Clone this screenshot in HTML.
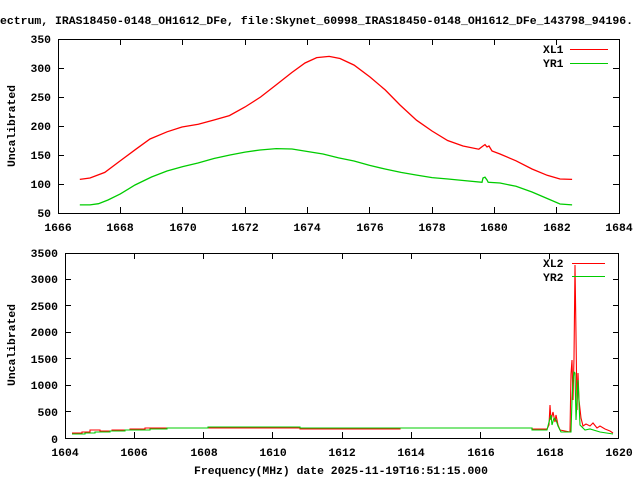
<!DOCTYPE html>
<html><head><meta charset="utf-8"><style>
html,body{margin:0;padding:0;background:#fff;width:640px;height:480px;overflow:hidden}
svg{display:block}
text{font-family:"Liberation Mono",monospace;font-weight:bold;font-size:11.4px;fill:#000}
</style></head><body>
<svg width="640" height="480" viewBox="0 0 640 480" xmlns="http://www.w3.org/2000/svg">
<text x="0" y="24" textLength="633" lengthAdjust="spacingAndGlyphs">ectrum, IRAS18450-0148_OH1612_DFe, file:Skynet_60998_IRAS18450-0148_OH1612_DFe_143798_94196.</text>
<!-- top plot -->
<g fill="none" stroke="#000" stroke-width="1">
<rect x="58.5" y="39.5" width="561" height="174"/>
<path d="M58 68.5h6M58 97.5h6M58 126.5h6M58 155.5h6M58 184.5h6M619 68.5h-6M619 97.5h-6M619 126.5h-6M619 155.5h-6M619 184.5h-6
M120.5 213v-6M182.5 213v-6M245.5 213v-6M307.5 213v-6M369.5 213v-6M432.5 213v-6M494.5 213v-6M556.5 213v-6
M120.5 39v6M182.5 39v6M245.5 39v6M307.5 39v6M369.5 39v6M432.5 39v6M494.5 39v6M556.5 39v6"/>
</g>
<g text-anchor="end">
<text x="51" y="217">50</text><text x="51" y="188">100</text><text x="51" y="159">150</text><text x="51" y="130">200</text><text x="51" y="101">250</text><text x="51" y="72">300</text><text x="51" y="43">350</text>
</g>
<g text-anchor="middle">
<text x="58" y="231">1666</text><text x="120" y="231">1668</text><text x="183" y="231">1670</text><text x="245" y="231">1672</text><text x="307" y="231">1674</text><text x="370" y="231">1676</text><text x="432" y="231">1678</text><text x="494" y="231">1680</text><text x="557" y="231">1682</text><text x="619" y="231">1684</text>
</g>
<text transform="translate(15,126) rotate(-90)" text-anchor="middle">Uncalibrated</text>
<polyline fill="none" stroke="#f00" stroke-width="1.3" points="79.8,179.4 90,178 104.8,172.4 120,161 135.9,149.2 150,139 167.1,131.8 182,127 198.3,124.3 214,120 229.4,115.6 245,107 260.6,97 276,85 291.7,72.6 305,63 316.7,57.6 329.2,56.4 340,58.5 354.1,65.1 370,77 385.3,90 400,105 416.5,120.2 432,131 447.6,140.5 463,146 478.8,149.2 483,146 485,144.6 487,147 489,146 492,151 500,154 516,160.8 532,169 547.2,175.3 560,179 572.1,179.4"/>
<polyline fill="none" stroke="#0c0" stroke-width="1.3" points="79.8,204.9 90,204.9 98.5,203.7 108,200 120.3,193.9 135,185 151.5,177 167,171 182.7,166.6 198,163 213.9,158.5 230,155 245,152.1 260,150 276.2,148.6 292,149 307.4,151.5 323,154 338.6,157.9 354,161 369.7,165.4 385,169 400.9,172.4 416,175 432.1,177.6 448,179 463.3,180.5 482,182.3 483,178 485,177.2 487,180 488.2,182.3 500,183 516,186.3 532,192 547.2,198.5 560,204 572.1,204.9"/>
<text x="543" y="53">XL1</text><path d="M570 49.5h38" stroke="#f00" stroke-width="1"/>
<text x="543" y="67">YR1</text><path d="M570 63.5h38" stroke="#0c0" stroke-width="1"/>
<!-- bottom plot -->
<g fill="none" stroke="#000" stroke-width="1">
<rect x="65.5" y="253.5" width="553" height="185"/>
<path d="M65 279.5h6M65 305.5h6M65 332.5h6M65 358.5h6M65 385.5h6M65 411.5h6M619 279.5h-6M619 305.5h-6M619 332.5h-6M619 358.5h-6M619 385.5h-6M619 411.5h-6
M134.5 438v-6M203.5 438v-6M272.5 438v-6M342.5 438v-6M411.5 438v-6M480.5 438v-6M549.5 438v-6
M134.5 253v6M203.5 253v6M272.5 253v6M342.5 253v6M411.5 253v6M480.5 253v6M549.5 253v6"/>
</g>
<g text-anchor="end">
<text x="58" y="443">0</text><text x="58" y="416">500</text><text x="58" y="389">1000</text><text x="58" y="363">1500</text><text x="58" y="336">2000</text><text x="58" y="310">2500</text><text x="58" y="283">3000</text><text x="58" y="257">3500</text>
</g>
<g text-anchor="middle">
<text x="65" y="456">1604</text><text x="134" y="456">1606</text><text x="204" y="456">1608</text><text x="273" y="456">1610</text><text x="342" y="456">1612</text><text x="411" y="456">1614</text><text x="481" y="456">1616</text><text x="550" y="456">1618</text><text x="619" y="456">1620</text>
</g>
<text transform="translate(15,345) rotate(-90)" text-anchor="middle">Uncalibrated</text>
<text x="341" y="474" text-anchor="middle">Frequency(MHz) date 2025-11-19T16:51:15.000</text>
<polyline fill="none" stroke="#f00" stroke-width="1.1" points="72,433 82,433 82,432 90,432 90,430 100,430 100,431 112,431 112,430 130,430 130,429 145,429 145,428 300,428 300,429 400,429 400,428 532,428 532,429 547,429 549,425 550,405 551,420 553,412 555,422 556,415 558,425 560,430 565,431 570,432 571,374 572,360 573,400 574,358 575,265 576,335 577,410 578,373 579,400 581,418 583,426 586,424 590,426 593,423 597,428 600,426 605,429 610,431 613,433"/>
<polyline fill="none" stroke="#0c0" stroke-width="1.1" points="72,434 85,434 85,433 95,433 95,432 110,432 110,431 125,431 125,430 150,430 150,429 167,429 167,428 208,428 208,427 300,427 300,428 532,428 532,430 547,430 549,422 551,415 552,425 554,418 556,420 558,426 561,432 571,432 572,400 573,380 574,372 575,373 576,420 577,400 578,380 580,425 585,430 590,429 600,432 613,434"/>
<text x="543" y="267">XL2</text><path d="M572 263.5h33" stroke="#f00" stroke-width="1"/>
<text x="543" y="281">YR2</text><path d="M572 276.5h33" stroke="#0c0" stroke-width="1"/>
</svg>
</body></html>
